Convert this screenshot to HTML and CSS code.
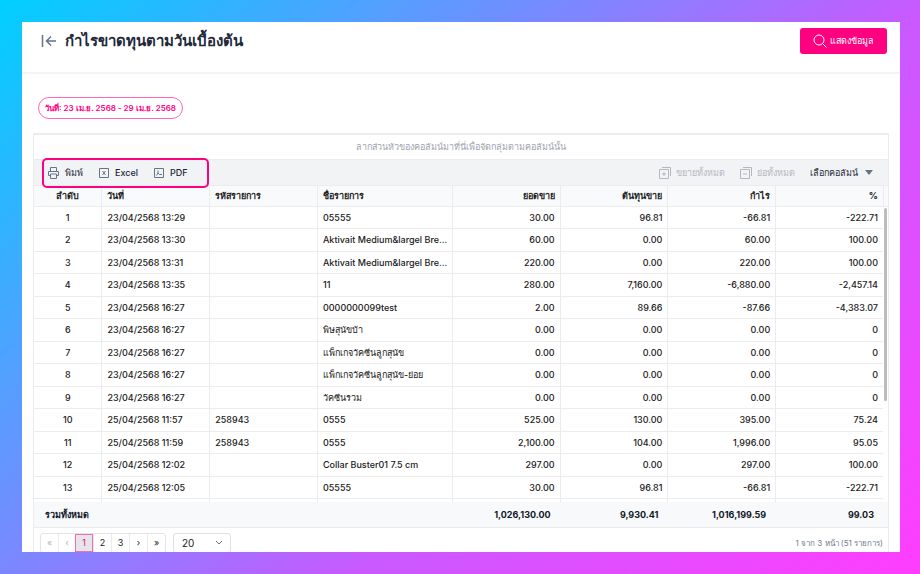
FILE: index.html
```
<!DOCTYPE html>
<html lang="th">
  <head>
    <meta charset="UTF-8">
    <meta name="viewport" content="width=device-width">
    <title>กำไรขาดทุนตามวันเบื้องต้น</title>
    <link rel="stylesheet" href="styles.css">
  </head>
  <body>
    <main class="panel">
      <header class="top">
        <a href="#" class="back" aria-label="ย้อนกลับ"><svg width="16" height="14" viewBox="0 0 16 14"><path d="M1.500 1v12M15 7H6M10 2.500L5.500 7l4.500 4.500"/></svg></a>
        <h1>กำไรขาดทุนตามวันเบื้องต้น</h1>
        <button class="show"><svg width="14" height="14" viewBox="0 0 14 14"><circle cx="6" cy="6" r="5"/><path d="M9.700 9.700l3.800 3.800"/></svg>แสดงข้อมูล</button>
      </header>
      <span class="chip">วันที่: 23 เม.ย. 2568 - 29 เม.ย. 2568</span>
      <section class="grid">
        <div class="group">ลากส่วนหัวของคอลัมน์มาที่นี่เพื่อจัดกลุ่มตามคอลัมน์นั้น</div>
        <div class="bar">
          <div class="export">
            <button><svg width="11" height="12" viewBox="0 0 11 12"><path d="M2.500 4.500v-4h6v4M2.500 8.500h-2v-4h10v4h-2M2.500 7h6v4.500h-6z"/></svg>พิมพ์</button>
            <button><svg width="10" height="10" viewBox="0 0 10 10"><path d="M.5.5h9v9h-9zM3.500 3l3 4M6.500 3l-3 4"/></svg>Excel</button>
            <button><svg width="10" height="10" viewBox="0 0 10 10"><path d="M.5.5h9v9h-9zM2.500 7.500L4 5V2.500M4 5l1.500 1.500L8 6.500"/></svg>PDF</button>
          </div>
          <button class="tool" disabled><svg width="12" height="12" viewBox="0 0 12 12"><path d="M.5 2.500h9v9h-9zM3 .5h8.500V9M5 5v4M3 7h4"/></svg>ขยายทั้งหมด</button>
          <button class="tool" disabled><svg width="12" height="12" viewBox="0 0 12 12"><path d="M.5 2.500h9v9h-9zM3 .5h8.500V9M3 7h4"/></svg>ย่อทั้งหมด</button>
          <button class="cols">เลือกคอลัมน์<i></i></button>
        </div>
        <div class="data">
          <table>
            <colgroup><col class="c1"><col class="c2"><col class="c2"><col class="c3"><col class="c2"><col class="c2"><col class="c2"><col class="c2"><col></colgroup>
            <thead>
              <tr><th>ลำดับ</th><th>วันที่</th><th>รหัสรายการ</th><th>ชื่อรายการ</th><th>ยอดขาย</th><th>ต้นทุนขาย</th><th>กำไร</th><th>%</th><th></th></tr>
            </thead>
            <tbody>
              <tr><td>1</td><td>23/04/2568 13:29</td><td></td><td>05555</td><td>30.00</td><td>96.81</td><td>-66.81</td><td>-222.71</td></tr>
              <tr><td>2</td><td>23/04/2568 13:30</td><td></td><td>Aktivait Medium&amp;largel Bre...</td><td>60.00</td><td>0.00</td><td>60.00</td><td>100.00</td></tr>
              <tr><td>3</td><td>23/04/2568 13:31</td><td></td><td>Aktivait Medium&amp;largel Bre...</td><td>220.00</td><td>0.00</td><td>220.00</td><td>100.00</td></tr>
              <tr><td>4</td><td>23/04/2568 13:35</td><td></td><td>11</td><td>280.00</td><td>7,160.00</td><td>-6,880.00</td><td>-2,457.14</td></tr>
              <tr><td>5</td><td>23/04/2568 16:27</td><td></td><td>0000000099test</td><td>2.00</td><td>89.66</td><td>-87.66</td><td>-4,383.07</td></tr>
              <tr><td>6</td><td>23/04/2568 16:27</td><td></td><td>พิษสุนัขบ้า</td><td>0.00</td><td>0.00</td><td>0.00</td><td>0</td></tr>
              <tr><td>7</td><td>23/04/2568 16:27</td><td></td><td>แพ็กเกจวัคซีนลูกสุนัข</td><td>0.00</td><td>0.00</td><td>0.00</td><td>0</td></tr>
              <tr><td>8</td><td>23/04/2568 16:27</td><td></td><td>แพ็กเกจวัคซีนลูกสุนัข-ย่อย</td><td>0.00</td><td>0.00</td><td>0.00</td><td>0</td></tr>
              <tr><td>9</td><td>23/04/2568 16:27</td><td></td><td>วัคซีนรวม</td><td>0.00</td><td>0.00</td><td>0.00</td><td>0</td></tr>
              <tr><td>10</td><td>25/04/2568 11:57</td><td>258943</td><td>0555</td><td>525.00</td><td>130.00</td><td>395.00</td><td>75.24</td></tr>
              <tr><td>11</td><td>25/04/2568 11:59</td><td>258943</td><td>0555</td><td>2,100.00</td><td>104.00</td><td>1,996.00</td><td>95.05</td></tr>
              <tr><td>12</td><td>25/04/2568 12:02</td><td></td><td>Collar Buster01 7.5 cm</td><td>297.00</td><td>0.00</td><td>297.00</td><td>100.00</td></tr>
              <tr><td>13</td><td>25/04/2568 12:05</td><td></td><td>05555</td><td>30.00</td><td>96.81</td><td>-66.81</td><td>-222.71</td></tr>
              <tr class="cut"><td></td><td></td><td></td><td></td><td></td><td></td><td></td><td></td></tr>
            </tbody>
            <tfoot>
              <tr><td colspan="4">รวมทั้งหมด</td><td>1,026,130.00</td><td>9,930.41</td><td>1,016,199.59</td><td>99.03</td><td></td></tr>
            </tfoot>
          </table>
        </div>
        <nav class="pager">
          <div class="pages">
            <button disabled>«</button><button disabled>‹</button><button class="on">1</button><button>2</button><button>3</button><button>›</button><button>»</button>
          </div>
          <div class="size">
            <select aria-label="จำนวนต่อหน้า"><option>20</option><option>50</option><option>100</option></select>
            <svg width="8" height="6" viewBox="0 0 8 6"><path d="M1 1l3 3 3-3"/></svg>
          </div>
          <span class="info">1 จาก 3 หน้า (51 รายการ)</span>
        </nav>
      </section>
    </main>
  </body>
</html>
```
FILE: styles.css
```
* {box-sizing: border-box;}
body {color: #212121; font: 9px/14px Inter, sans-serif;
  height: 100vh; margin: 0; padding: 22px 20px 22px 22px;
  background: linear-gradient(135deg, #00cfff, #8085ff 40%, #c85aff 62%, #ff3dff);}
button, select {font: inherit; color: inherit; margin: 0; padding: 0;
  background: none; border: 0; cursor: pointer;}
button {display: flex; align-items: center; white-space: nowrap;}
button:disabled {cursor: default;}
svg {fill: none; stroke: currentColor; flex: none;}
.panel {background: #fff; height: 100%; overflow: hidden;}
.top {display: flex; align-items: center; height: 52px;
  padding: 0 13px 12px 19px; border-bottom: 2px solid #f3f3f9;}
.back {display: flex; color: #64748b; margin-right: 8px;}
.back svg {stroke-width: 1.5;}
h1 {color: #1e293b; font-size: 15px; line-height: 20px; font-weight: 600;
  margin: 0 auto 0 0;}
.show {color: #fff; background: #ff0080; height: 26px; padding: 0 13px;
  gap: 3px; border-radius: 3px;}
.chip {color: #ff0080; font-size: 8px; font-weight: 600; line-height: 20px;
  display: block; width: fit-content; padding: 0 6px; margin: 23px 16px 14px;
  border: 1px solid #ff66b3; border-radius: 11px;}
.grid {margin: 0 11px; border: 1px solid #ececef; border-top-width: 2px;}
.group {color: #9ca3af; text-align: center; line-height: 24px;}
.bar {color: #1e293b; background: #f2f3f5; display: flex;
  align-items: center; height: 27px; border-block: 1px solid #ececef;
  padding-right: 15px; gap: 15px;}
.export {display: flex; gap: 16px; height: 30px; width: 167px;
  margin: 0 auto 0 8px; padding-left: 4px; font-weight: 500;
  border: 2px solid #ff0080; border-radius: 5px;
  position: relative; z-index: 1;}
.export button {gap: 6px;}
.export svg, .cols i {color: #64748b;}
.tool {color: #b4b7c0; gap: 5px;}
.cols i {border: 4px solid #0000; border-top: 5px solid; border-bottom: 0;
  margin-left: 7px;}
.data {position: relative;}
.data::after {content: ''; background: #bdbdbd; border-radius: 2px;
  width: 3px; position: absolute; right: 1px; top: 22px; height: 193px;}
table {width: 100%; table-layout: fixed; border-collapse: separate;
  border-spacing: 0;}
.c1 {width: 7.9%;}
.c2 {width: 12.62%;}
.c3 {width: 15.8%;}
th, td {padding: 0 5px; height: 23px; white-space: nowrap; overflow: hidden;
  text-align: left; border-bottom: 1px solid #ececef;}
th {background: #f9fafb; height: 21px;}
tbody td {font-weight: 500;}
tbody tr:nth-child(odd) td {height: 22px;}
:is(th,tbody td)+:is(th,td) {border-left: 1px solid #ececef;}
:is(th,tbody td):first-child {text-align: center;}
:is(th,td):nth-child(n+5) {text-align: right;}
th:last-child {padding: 0;}
tbody .cut td {height: 3px; border-bottom: 0;}
tfoot tr td {color: #111827; background: #f8f9fb; font-weight: 700;
  height: 26px; padding: 0 9px; text-align: right;}
tfoot td:first-child {text-align: left; padding-left: 11px;}
.pager {display: flex; padding: 5px 5px 5px 6px; height: 30px;}
.pages {display: flex; border: 1px solid #e2e4e8; border-radius: 3px;}
.pages button {width: 18px; justify-content: center;}
.pages button+button {border-left: 1px solid #e9eaed;}
.pages button:disabled {color: #b4b7c0; width: 17px;}
.pages .on {color: #ff0080; background: #e5e6ea; border: 1px solid #ff66b3;}
.size {position: relative; margin-left: 7px; font-size: 10px;}
.size select {appearance: none; width: 58px; height: 100%; padding-left: 8px;
  border: 1px solid #dcdfe4; border-radius: 3px;}
.size svg {position: absolute; right: 8px; top: 7px; color: #64748b;}
.info {color: #737b8b; font-size: 8px; margin: 3px 0 0 auto;}
```
